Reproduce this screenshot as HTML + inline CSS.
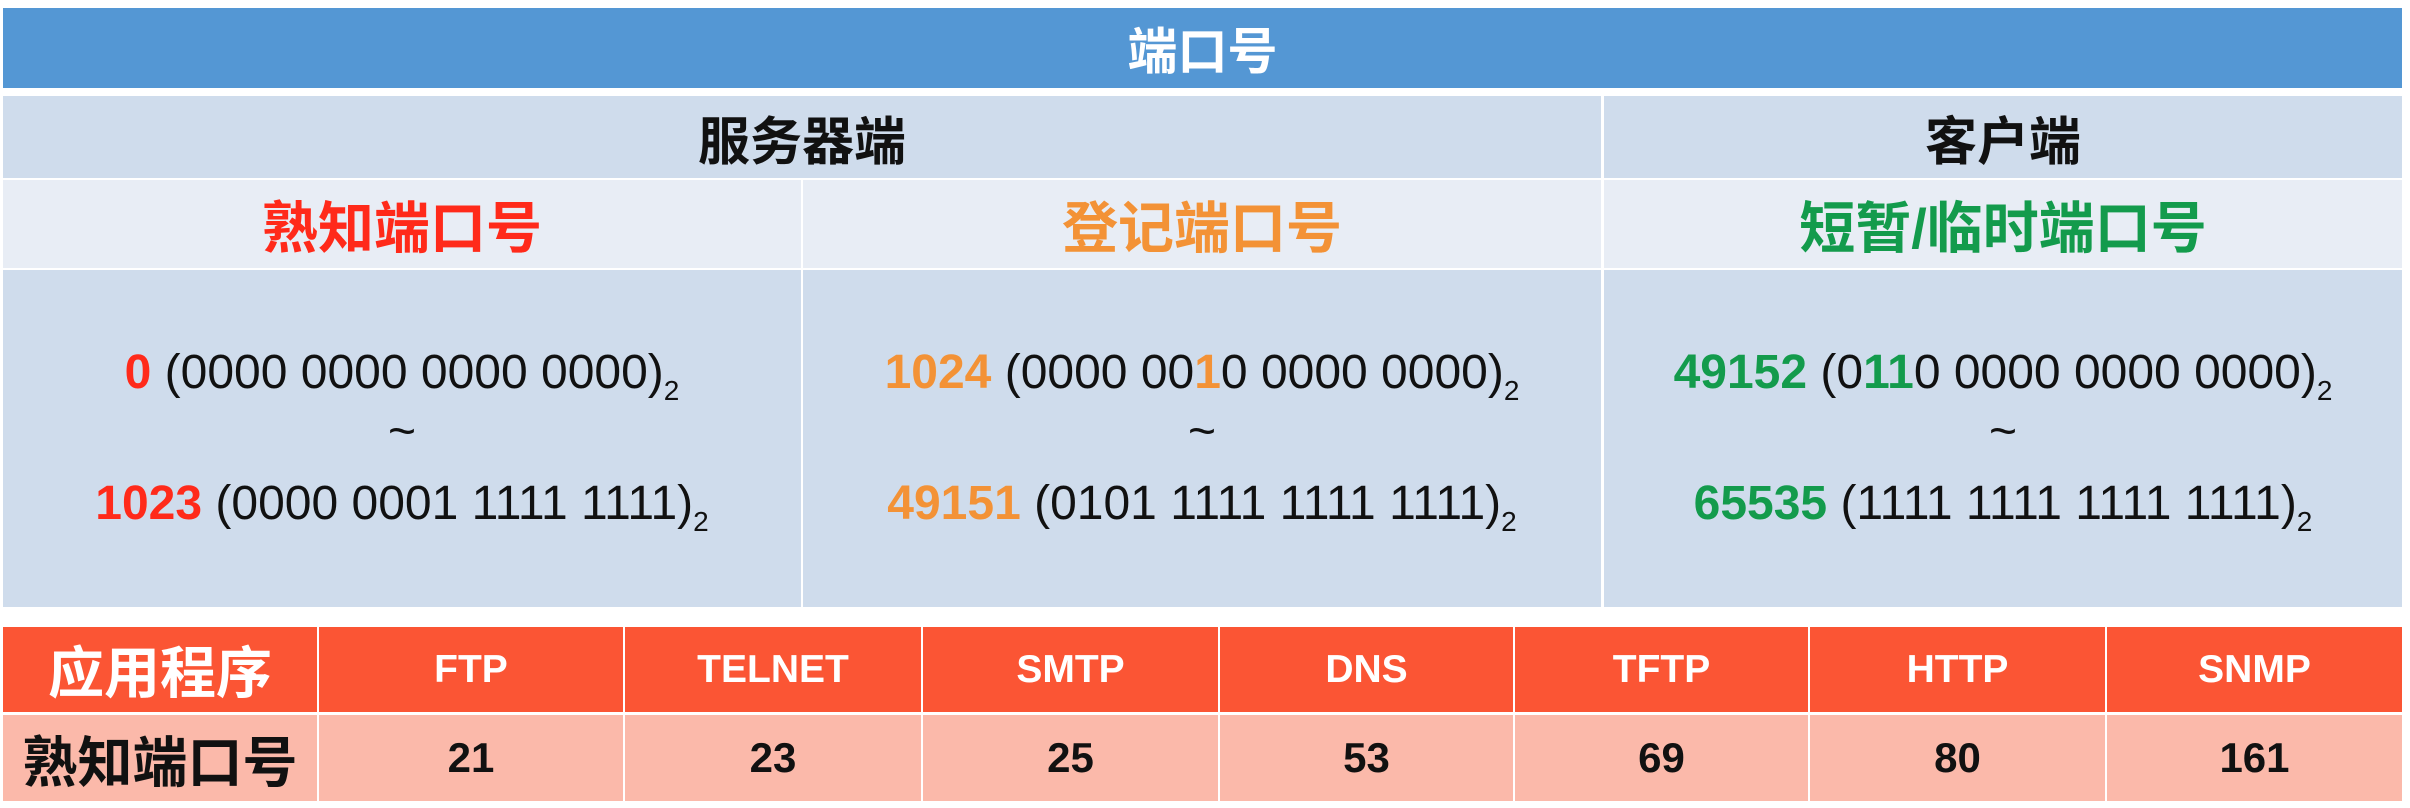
<!DOCTYPE html>
<html><head><meta charset="utf-8"><style>
*{margin:0;padding:0;box-sizing:border-box}
body{width:2410px;height:808px;background:#fff;position:relative;overflow:hidden;font-family:"Liberation Sans","Noto Sans CJK SC",sans-serif}
.b{position:absolute;display:flex;align-items:center;justify-content:center;font-weight:bold}
.t{position:absolute;text-align:center;font-size:48px;color:#111;white-space:nowrap}
.t b{font-weight:bold}
sub{font-size:28px;vertical-align:-12px}
.r{color:#ff2a1a}.o{color:#f39236}.g{color:#139b4c}
</style></head><body>
<div class="b" style="left:3px;top:8px;width:2399px;height:80px;background:#5497d4;color:#fff;font-size:50px">端口号</div>
<div class="b" style="left:3px;top:96px;width:1598px;height:82px;background:#cfdcec;color:#111;font-size:52px">服务器端</div>
<div class="b" style="left:1604px;top:96px;width:798px;height:82px;background:#cfdcec;color:#111;font-size:52px">客户端</div>
<div class="b r" style="left:3px;top:180px;width:798px;height:88px;background:#e8edf5;font-size:56px">熟知端口号</div>
<div class="b o" style="left:803px;top:180px;width:798px;height:88px;background:#e8edf5;font-size:56px">登记端口号</div>
<div class="b g" style="left:1604px;top:180px;width:798px;height:88px;background:#e8edf5;font-size:56px">短暂/临时端口号</div>
<div style="position:absolute;left:3px;top:270px;width:798px;height:337px;background:#cfdcec"></div>
<div style="position:absolute;left:803px;top:270px;width:798px;height:337px;background:#cfdcec"></div>
<div style="position:absolute;left:1604px;top:270px;width:798px;height:337px;background:#cfdcec"></div>

<div class="t" style="left:3px;width:798px;top:345px"><b class="r">0</b> (0000 0000 0000 0000)<sub>2</sub></div>
<div class="t" style="left:3px;width:798px;top:404px">~</div>
<div class="t" style="left:3px;width:798px;top:476px"><b class="r">1023</b> (0000 0001 1111 1111)<sub>2</sub></div>

<div class="t" style="left:803px;width:798px;top:345px"><b class="o">1024</b> (0000 00<b class="o">1</b>0 0000 0000)<sub>2</sub></div>
<div class="t" style="left:803px;width:798px;top:404px">~</div>
<div class="t" style="left:803px;width:798px;top:476px"><b class="o">49151</b> (0101 1111 1111 1111)<sub>2</sub></div>

<div class="t" style="left:1604px;width:798px;top:345px"><b class="g">49152</b> (0<b class="g">11</b>0 0000 0000 0000)<sub>2</sub></div>
<div class="t" style="left:1604px;width:798px;top:404px">~</div>
<div class="t" style="left:1604px;width:798px;top:476px"><b class="g">65535</b> (1111 1111 1111 1111)<sub>2</sub></div>

<div class="b" style="left:3px;top:627px;width:314px;height:85px;background:#fb5534;color:#fff;font-size:56px">应用程序</div>
<div class="b" style="left:3px;top:715px;width:314px;height:86px;background:#fbb9aa;color:#111;font-size:55px">熟知端口号</div>

<div class="b" style="left:319px;top:627px;width:304px;height:85px;background:#fb5534;color:#fff;font-size:39px">FTP</div>
<div class="b" style="left:625px;top:627px;width:296px;height:85px;background:#fb5534;color:#fff;font-size:39px">TELNET</div>
<div class="b" style="left:923px;top:627px;width:295px;height:85px;background:#fb5534;color:#fff;font-size:39px">SMTP</div>
<div class="b" style="left:1220px;top:627px;width:293px;height:85px;background:#fb5534;color:#fff;font-size:39px">DNS</div>
<div class="b" style="left:1515px;top:627px;width:293px;height:85px;background:#fb5534;color:#fff;font-size:39px">TFTP</div>
<div class="b" style="left:1810px;top:627px;width:295px;height:85px;background:#fb5534;color:#fff;font-size:39px">HTTP</div>
<div class="b" style="left:2107px;top:627px;width:295px;height:85px;background:#fb5534;color:#fff;font-size:39px">SNMP</div>

<div class="b" style="left:319px;top:715px;width:304px;height:86px;background:#fbb9aa;color:#111;font-size:42px">21</div>
<div class="b" style="left:625px;top:715px;width:296px;height:86px;background:#fbb9aa;color:#111;font-size:42px">23</div>
<div class="b" style="left:923px;top:715px;width:295px;height:86px;background:#fbb9aa;color:#111;font-size:42px">25</div>
<div class="b" style="left:1220px;top:715px;width:293px;height:86px;background:#fbb9aa;color:#111;font-size:42px">53</div>
<div class="b" style="left:1515px;top:715px;width:293px;height:86px;background:#fbb9aa;color:#111;font-size:42px">69</div>
<div class="b" style="left:1810px;top:715px;width:295px;height:86px;background:#fbb9aa;color:#111;font-size:42px">80</div>
<div class="b" style="left:2107px;top:715px;width:295px;height:86px;background:#fbb9aa;color:#111;font-size:42px">161</div>
</body></html>
